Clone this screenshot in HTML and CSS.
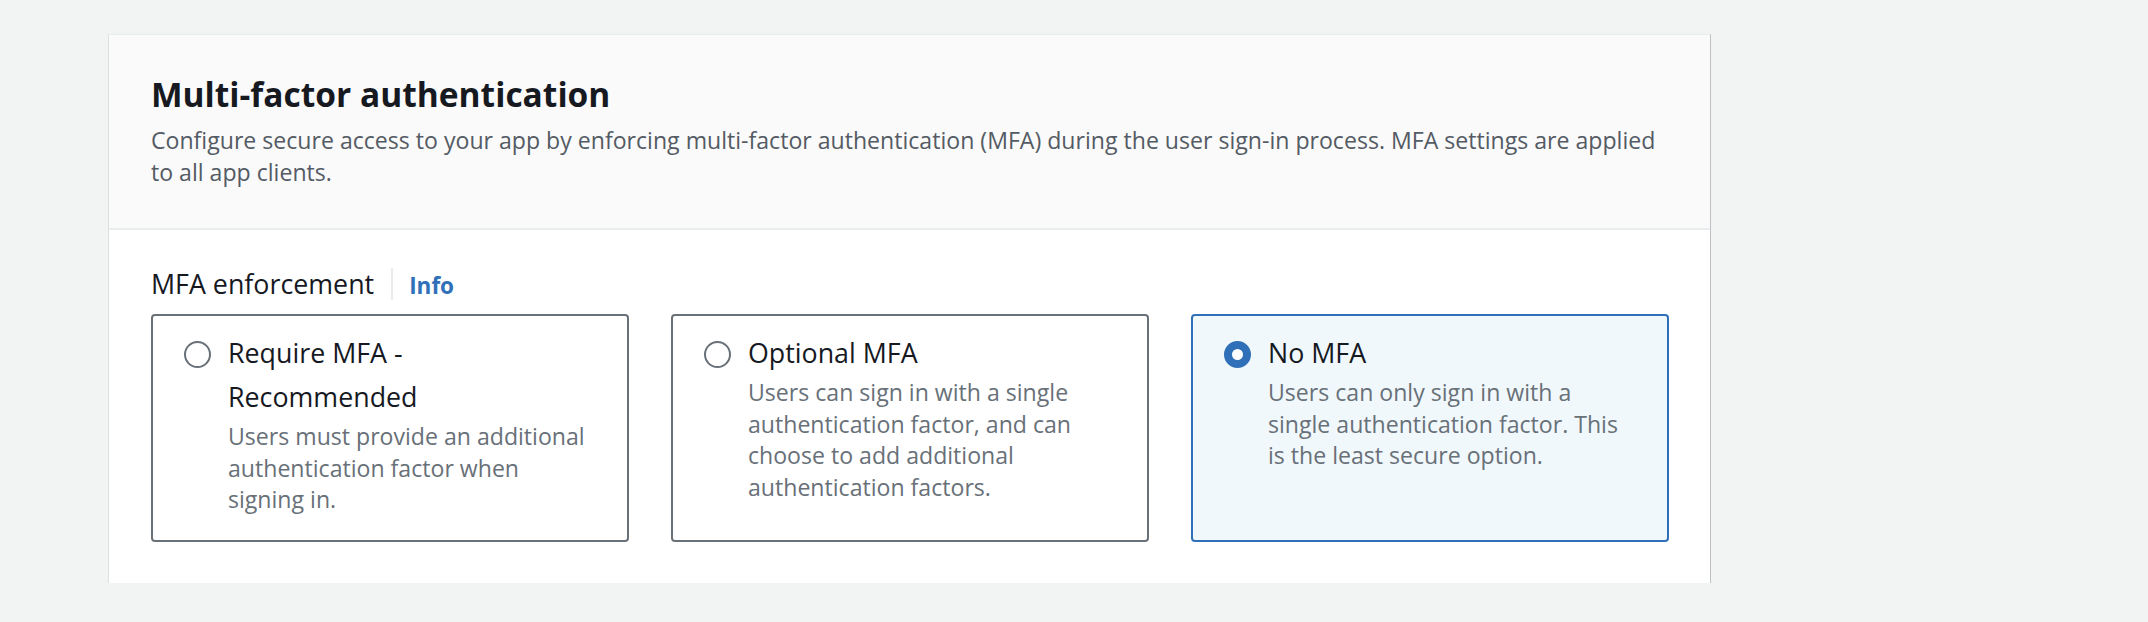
FILE: index.html
```html
<!DOCTYPE html>
<html lang="en">
<head>
<meta charset="utf-8">
<title>Multi-factor authentication</title>
<link rel="stylesheet" href="styles.css">
</head>
<body>
<section class="card">
  <header class="card-header">
    <h2 class="card-title">Multi-factor authentication</h2>
    <p class="card-desc">Configure secure access to your app by enforcing multi-factor authentication (MFA) during the user sign-in process. MFA settings are applied to all app clients.</p>
  </header>
  <div class="card-body">
    <div class="field-label">
      <span class="label-text">MFA enforcement</span>
      <span class="label-divider"></span>
      <a class="info-link">Info</a>
    </div>
    <div class="tiles">
      <label class="tile">
        <span class="radio"></span>
        <span class="tile-text">
          <span class="tile-title">Require MFA - Recommended</span>
          <span class="tile-desc">Users must provide an additional authentication factor when signing in.</span>
        </span>
      </label>
      <label class="tile">
        <span class="radio"></span>
        <span class="tile-text">
          <span class="tile-title">Optional MFA</span>
          <span class="tile-desc">Users can sign in with a single authentication factor, and can choose to add additional authentication factors.</span>
        </span>
      </label>
      <label class="tile tile-selected">
        <span class="radio radio-checked"></span>
        <span class="tile-text">
          <span class="tile-title">No MFA</span>
          <span class="tile-desc">Users can only sign in with a single authentication factor. This is the least secure option.</span>
        </span>
      </label>
    </div>
  </div>
</section>
</body>
</html>
```
FILE: styles.css
```css
* { box-sizing: border-box; }

body {
  margin: 0;
  padding: 34px 0 0 109px;
  background: #f2f3f3;
  font-family: "Open Sans", "Noto Sans", sans-serif;
  color: #16191f;
}

.card {
  width: 1601px;
  background: #ffffff;
  box-shadow: 0 1px 0 0 #a7adb2, 0 2px 1px 0 rgba(0, 28, 36, 0.18), 1px 0 0 0 #c3c7ca, -1px 0 0 0 #e3e5e6;
  border-top: 1px solid #eaeded;
}

.card-header {
  background: #fafafa;
  padding: 37px 41px 40px 42px;
  border-bottom: 2px solid #eaeded;
}

.card-title {
  margin: 0;
  font-size: 33.5px;
  line-height: 44px;
  font-weight: 700;
  color: #16191f;
}

.card-desc {
  margin: 8px 0 0;
  font-size: 23.1px;
  line-height: 32px;
  color: #545b64;
}

.card-body {
  padding: 36px 41px 41px 42px;
}

.field-label {
  display: flex;
  align-items: baseline;
  height: 36px;
}

.label-text {
  font-size: 26.8px;
  line-height: 36px;
  color: #16191f;
}

.label-divider {
  align-self: center;
  width: 2px;
  height: 32px;
  background: #e9ebed;
  margin: 0 16px 0 17px;
}

.info-link {
  font-size: 22.5px;
  line-height: 36px;
  font-weight: 700;
  color: #2f70b8;
  cursor: pointer;
}

.tiles {
  display: grid;
  grid-template-columns: repeat(3, 1fr);
  gap: 42px;
  margin-top: 12px;
}

.tile {
  display: flex;
  gap: 17px;
  border: 2px solid #687078;
  border-radius: 4px;
  padding: 15px 34px 24px 31px;
  background: #ffffff;
  cursor: pointer;
}

.tile-selected {
  border-color: #2f70b8;
  background: #f1f8fc;
}

.radio {
  flex: none;
  width: 27px;
  height: 27px;
  margin-top: 10px;
  border: 2px solid #687078;
  border-radius: 50%;
  background: #ffffff;
}

.radio-checked {
  border: 8px solid #2f70b8;
}

.tile-text {
  display: flex;
  flex-direction: column;
  min-width: 0;
}

.tile-title {
  font-size: 26.8px;
  line-height: 44px;
  color: #16191f;
}

.tile-desc {
  margin-top: 2px;
  font-size: 23.1px;
  line-height: 31.5px;
  color: #687078;
}
```
